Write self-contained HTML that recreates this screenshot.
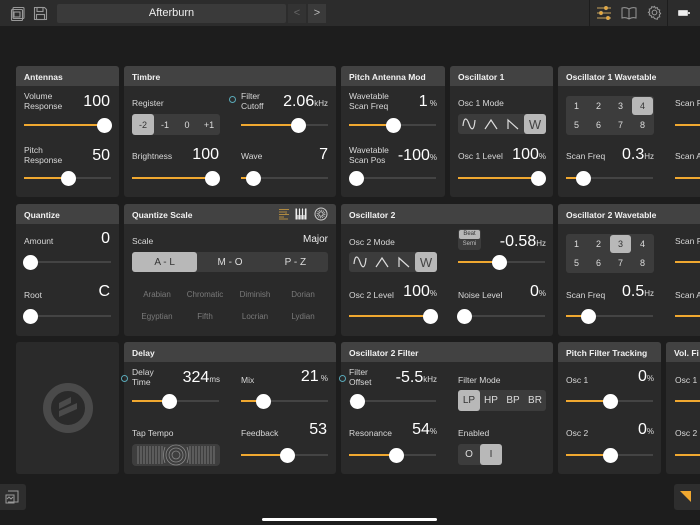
<!DOCTYPE html>
<html><head><meta charset="utf-8"><style>
*{margin:0;padding:0;box-sizing:border-box}
body{width:700px;height:525px;background:#1d1d1d;font-family:"Liberation Sans",sans-serif;color:#ddd;position:relative;overflow:hidden}
.a{position:absolute}
.top{left:0;top:0;width:700px;height:26px;background:#2c2c2c}
.p{position:absolute;background:#2a2a2a;border-radius:3px;overflow:hidden}
.h{height:20px;background:#424242;color:#f2f2f2;font-size:8.5px;font-weight:bold;padding:6px 8px 0;white-space:nowrap}
.l{position:absolute;font-size:8.5px;color:#d8d8d8;line-height:10px;white-space:nowrap}
.v{position:absolute;font-size:16px;color:#fff;text-align:right;line-height:16px}
.v small{font-size:8px;color:#ddd}
.tr{position:absolute;height:2px;background:#444}
.fi{position:absolute;height:2px;background:#f0a830}
.k{position:absolute;width:15px;height:15px;border-radius:50%;background:#fff}
.seg{position:absolute;background:#3c3c3c;border-radius:3px;display:flex;font-size:9px;color:#ddd}
.seg div{flex:1;display:flex;align-items:center;justify-content:center;border-radius:3px}
.seg .on{background:#b8b8b8;color:#333}
.g{position:absolute;font-size:8px;color:#7a7a7a;text-align:center;width:60px}
.grid{position:absolute;background:#3c3c3c;border-radius:3px;width:88px;height:39px}
.grid div{position:absolute;width:21px;height:18px;font-size:9px;color:#ddd;display:flex;align-items:center;justify-content:center;border-radius:3px}
.dot{position:absolute;width:7px;height:7px;border-radius:50%;border:1.5px solid #5aa9b8}
</style></head><body>
<div class="a top"></div>
<svg class="a" style="left:10px;top:6px" width="16" height="16" viewBox="0 0 16 16" fill="none" stroke="#999" stroke-width="1.1"><rect x="3" y="1.5" width="11" height="11" rx="1"/><rect x="1.5" y="3.5" width="11" height="11" rx="1"/><rect x="4" y="6" width="6" height="5"/></svg>
<svg class="a" style="left:33px;top:6px" width="15" height="15" viewBox="0 0 15 15" fill="none" stroke="#999" stroke-width="1.1"><path d="M1.5 1.5h10l2 2v10h-12z"/><rect x="4" y="1.5" width="6" height="4"/><rect x="3.5" y="8.5" width="8" height="5"/></svg>
<div class="a" style="left:57px;top:4px;width:229px;height:19px;background:#3a3a3a;border-radius:2px;color:#eee;font-size:11px;text-align:center;line-height:19px">Afterburn</div>
<div class="a" style="left:288px;top:4px;width:18px;height:19px;background:#333;color:#666;font-size:11px;text-align:center;line-height:19px">&lt;</div>
<div class="a" style="left:308px;top:4px;width:18px;height:19px;background:#3a3a3a;color:#bbb;font-size:11px;text-align:center;line-height:19px">&gt;</div>
<div class="a" style="left:589px;top:0;width:1px;height:26px;background:#1d1d1d"></div>
<div class="a" style="left:667px;top:0;width:1px;height:26px;background:#1d1d1d"></div>
<svg class="a" style="left:596px;top:6px" width="16" height="14" viewBox="0 0 16 14" stroke="#c9a25a" stroke-width="1" fill="#f0a830"><path d="M1 2h14M1 7h14M1 12h14"/><circle cx="10" cy="2" r="1.6"/><circle cx="5" cy="7" r="1.6"/><circle cx="12" cy="12" r="1.6"/></svg>
<svg class="a" style="left:621px;top:6px" width="16" height="14" viewBox="0 0 16 14" fill="none" stroke="#999" stroke-width="1"><path d="M8 3v10M8 3C6 1.5 3 1.5 1 2v10c2-.5 5-.5 7 1 2-1.5 5-1.5 7-1V2c-2-.5-5-.5-7 1"/></svg>
<svg class="a" style="left:647px;top:5px" width="15" height="15" viewBox="0 0 16 16" fill="none" stroke="#999" stroke-width="1.1"><circle cx="8" cy="8" r="2.5"/><path d="M8 1.5l1 1.8 2-.5.6 2 2 .6-.5 2 1.4 1.6-1.4 1.6.5 2-2 .6-.6 2-2-.5L8 14.5l-1-1.8-2 .5-.6-2-2-.6.5-2L1.5 8l1.4-1.6-.5-2 2-.6.6-2 2 .5z"/></svg>
<div class="a" style="left:678px;top:10px;width:10px;height:6px;border:1px solid #ccc;border-radius:1px;background:#eee"></div>
<div class="a" style="left:688px;top:12px;width:2px;height:2px;background:#ccc"></div>

<div class="p" style="left:16px;top:66px;width:103px;height:131px"><div class="h">Antennas</div></div>
<div class="p" style="left:124px;top:66px;width:212px;height:131px"><div class="h">Timbre</div></div>
<div class="p" style="left:341px;top:66px;width:104px;height:131px"><div class="h">Pitch Antenna Mod</div></div>
<div class="p" style="left:450px;top:66px;width:103px;height:131px"><div class="h">Oscillator 1</div></div>
<div class="p" style="left:558px;top:66px;width:150px;height:131px"><div class="h">Oscillator 1 Wavetable</div></div>
<div class="p" style="left:16px;top:204px;width:103px;height:132px"><div class="h">Quantize</div></div>
<div class="p" style="left:124px;top:204px;width:212px;height:132px"><div class="h">Quantize Scale</div></div>
<div class="p" style="left:341px;top:204px;width:212px;height:132px"><div class="h">Oscillator 2</div></div>
<div class="p" style="left:558px;top:204px;width:150px;height:132px"><div class="h">Oscillator 2 Wavetable</div></div>
<div class="p" style="left:16px;top:342px;width:103px;height:132px"></div>
<div class="p" style="left:124px;top:342px;width:212px;height:132px"><div class="h">Delay</div></div>
<div class="p" style="left:341px;top:342px;width:212px;height:132px"><div class="h">Oscillator 2 Filter</div></div>
<div class="p" style="left:558px;top:342px;width:103px;height:132px"><div class="h">Pitch Filter Tracking</div></div>
<div class="p" style="left:666px;top:342px;width:50px;height:132px"><div class="h">Vol. Fi</div></div>

<div class="l" style="left:24px;top:91px">Volume<br>Response</div><div class="v" style="left:60px;top:94px;width:50px">100</div>
<div class="l" style="left:24px;top:145px">Pitch<br>Response</div><div class="v" style="left:60px;top:148px;width:50px">50</div>
<div class="l" style="left:132px;top:98px">Register</div>
<div class="seg" style="left:132px;top:114px;width:88px;height:21px"><div class="on">-2</div><div>-1</div><div>0</div><div>+1</div></div>
<div class="l" style="left:132px;top:151px">Brightness</div><div class="v" style="left:160px;top:147px;width:59px">100</div>
<div class="dot" style="left:229px;top:96px"></div>
<div class="l" style="left:241px;top:91px">Filter<br>Cutoff</div><div class="v" style="left:260px;top:94px;width:68px">2.06<small>kHz</small></div>
<div class="l" style="left:241px;top:151px">Wave</div><div class="v" style="left:290px;top:147px;width:38px">7</div>
<div class="l" style="left:349px;top:91px">Wavetable<br>Scan Freq</div><div class="v" style="left:390px;top:94px;width:47px">1<small> %</small></div>
<div class="l" style="left:349px;top:145px">Wavetable<br>Scan Pos</div><div class="v" style="left:380px;top:148px;width:57px">-100<small>%</small></div>
<div class="l" style="left:458px;top:98px">Osc 1 Mode</div>
<div class="seg wv" style="left:458px;top:114px;width:88px;height:20px;font-size:13px"><div></div><div></div><div></div><div class="on" style="color:#444">W</div></div>
<div class="l" style="left:458px;top:151px">Osc 1 Level</div><div class="v" style="left:500px;top:147px;width:46px">100<small>%</small></div>
<div class="grid" style="left:566px;top:96px"><div style="left:0;top:1px">1</div><div style="left:22px;top:1px">2</div><div style="left:44px;top:1px">3</div><div style="left:66px;top:1px;background:#b8b8b8;color:#333">4</div><div style="left:0;top:20px">5</div><div style="left:22px;top:20px">6</div><div style="left:44px;top:20px">7</div><div style="left:66px;top:20px">8</div></div>
<div class="l" style="left:566px;top:151px">Scan Freq</div><div class="v" style="left:600px;top:147px;width:54px">0.3<small>Hz</small></div>
<div class="l" style="left:675px;top:98px">Scan P</div><div class="l" style="left:675px;top:151px">Scan A</div>
<div class="l" style="left:24px;top:236px">Amount</div><div class="v" style="left:60px;top:231px;width:50px">0</div>
<div class="l" style="left:24px;top:290px">Root</div><div class="v" style="left:60px;top:284px;width:50px">C</div>
<svg class="a" style="left:278px;top:208px" width="12" height="12" viewBox="0 0 12 12" stroke="#b08a40" stroke-width="1"><path d="M1 1.5h10M1 4h6M1 6.5h10M1 9h5M1 11h9M8 3v3"/></svg>
<svg class="a" style="left:295px;top:208px" width="12" height="12" viewBox="0 0 12 12"><rect x="0.5" y="0.5" width="11" height="11" fill="#eee"/><path d="M3 0v7M6 0v7M9 0v7" stroke="#2a2a2a" stroke-width="1.6"/><path d="M3 7v5M6 7v5M9 7v5" stroke="#2a2a2a" stroke-width=".6"/></svg>
<svg class="a" style="left:314px;top:207px" width="14" height="14" viewBox="0 0 14 14" fill="none" stroke="#ccc"><circle cx="7" cy="7" r="6"/><circle cx="7" cy="7" r="3.8" stroke-dasharray="1 1"/><circle cx="7" cy="7" r="2.2"/></svg>
<div class="l" style="left:132px;top:236px">Scale</div><div class="l" style="left:260px;top:235px;width:68px;text-align:right;font-size:10px;color:#eee">Major</div>
<div class="seg" style="left:132px;top:252px;width:196px;height:20px;font-size:10px"><div class="on">A - L</div><div>M - O</div><div>P - Z</div></div>
<div class="g" style="left:127px;top:290px">Arabian</div><div class="g" style="left:175px;top:290px">Chromatic</div><div class="g" style="left:225px;top:290px">Diminish</div><div class="g" style="left:273px;top:290px">Dorian</div>
<div class="g" style="left:127px;top:312px">Egyptian</div><div class="g" style="left:175px;top:312px">Fifth</div><div class="g" style="left:225px;top:312px">Locrian</div><div class="g" style="left:273px;top:312px">Lydian</div>
<div class="l" style="left:349px;top:237px">Osc 2 Mode</div>
<div class="seg wv" style="left:349px;top:252px;width:88px;height:20px;font-size:13px"><div></div><div></div><div></div><div class="on" style="color:#444">W</div></div>
<div class="a" style="left:458px;top:229px;width:23px;height:21px;background:#3c3c3c;border-radius:3px"></div>
<div class="a" style="left:459px;top:230px;width:21px;height:9px;background:#b8b8b8;border-radius:2px;font-size:6px;color:#333;text-align:center;line-height:9px">Beat</div>
<div class="a" style="left:459px;top:240px;width:21px;height:9px;font-size:6px;color:#bbb;text-align:center;line-height:9px">Semi</div>
<div class="v" style="left:485px;top:234px;width:61px">-0.58<small>Hz</small></div>
<div class="l" style="left:349px;top:290px">Osc 2 Level</div><div class="v" style="left:390px;top:284px;width:47px">100<small>%</small></div>
<div class="l" style="left:458px;top:290px">Noise Level</div><div class="v" style="left:500px;top:284px;width:46px">0<small>%</small></div>
<div class="grid" style="left:566px;top:234px"><div style="left:0;top:1px">1</div><div style="left:22px;top:1px">2</div><div style="left:44px;top:1px;background:#b8b8b8;color:#333">3</div><div style="left:66px;top:1px">4</div><div style="left:0;top:20px">5</div><div style="left:22px;top:20px">6</div><div style="left:44px;top:20px">7</div><div style="left:66px;top:20px">8</div></div>
<div class="l" style="left:566px;top:290px">Scan Freq</div><div class="v" style="left:600px;top:284px;width:54px">0.5<small>Hz</small></div>
<div class="l" style="left:675px;top:236px">Scan P</div><div class="l" style="left:675px;top:290px">Scan A</div>
<svg class="a" style="left:41px;top:381px" width="54" height="54" viewBox="0 0 54 54"><circle cx="27" cy="27" r="21" fill="none" stroke="#4a4a4a" stroke-width="8"/><path d="M18 30l18-8v6l-18 8zM18 22l12-6v6l-12 6z" fill="#4a4a4a"/></svg>
<div class="dot" style="left:121px;top:375px"></div>
<div class="l" style="left:132px;top:367px">Delay<br>Time</div><div class="v" style="left:160px;top:370px;width:60px">324<small>ms</small></div>
<div class="l" style="left:241px;top:375px">Mix</div><div class="v" style="left:270px;top:369px;width:58px">21<small> %</small></div>
<div class="l" style="left:132px;top:428px">Tap Tempo</div>
<svg class="a" style="left:132px;top:444px" width="88" height="22" viewBox="0 0 88 22"><rect width="88" height="22" rx="4" fill="#3e3e3e"/><g fill="none" stroke="#888" stroke-width=".8"><circle cx="44" cy="11" r="4"/><circle cx="44" cy="11" r="7"/><circle cx="44" cy="11" r="10"/><path d="M30 2v18M27 2v18M24 2v18M21 2v18M18 2v18M15 2v18M12 2v18M9 2v18M6 2v18M58 2v18M61 2v18M64 2v18M67 2v18M70 2v18M73 2v18M76 2v18M79 2v18M82 2v18M33 3q-3 8 0 16M55 3q3 8 0 16"/></g></svg>
<div class="l" style="left:241px;top:428px">Feedback</div><div class="v" style="left:270px;top:422px;width:57px">53</div>
<div class="dot" style="left:339px;top:375px"></div>
<div class="l" style="left:349px;top:367px">Filter<br>Offset</div><div class="v" style="left:370px;top:370px;width:67px">-5.5<small>kHz</small></div>
<div class="l" style="left:458px;top:375px">Filter Mode</div>
<div class="seg" style="left:458px;top:390px;width:88px;height:21px;font-size:10px"><div class="on">LP</div><div>HP</div><div>BP</div><div>BR</div></div>
<div class="l" style="left:349px;top:428px">Resonance</div><div class="v" style="left:390px;top:422px;width:47px">54<small>%</small></div>
<div class="l" style="left:458px;top:428px">Enabled</div>
<div class="seg" style="left:458px;top:444px;width:44px;height:21px;font-size:10px"><div>O</div><div class="on">I</div></div>
<div class="l" style="left:566px;top:375px">Osc 1</div><div class="v" style="left:600px;top:369px;width:54px">0<small>%</small></div>
<div class="l" style="left:566px;top:428px">Osc 2</div><div class="v" style="left:600px;top:422px;width:54px">0<small>%</small></div>
<div class="l" style="left:675px;top:375px">Osc 1</div><div class="l" style="left:675px;top:428px">Osc 2</div>

<div id="sl"></div>
<div class="a" style="left:0;top:484px;width:26px;height:26px;background:#2e2e2e;border-radius:0 3px 3px 0"></div>
<svg class="a" style="left:5px;top:490px" width="14" height="14" viewBox="0 0 14 14" fill="none" stroke="#999" stroke-width="1"><path d="M3 1h10v11H3M1 5h8v8H1z"/><path d="M2 9l2-2 2 2 2-2"/></svg>
<div class="a" style="left:674px;top:484px;width:30px;height:26px;background:#2e2e2e;border-radius:3px"></div>
<svg class="a" style="left:679px;top:489px" width="14" height="14" viewBox="0 0 14 14"><path d="M1 2h11v11z" fill="#f0a830"/></svg>
<div class="a" style="left:262px;top:518px;width:175px;height:3px;background:#fff;border-radius:2px"></div>
<script>
var W=['<svg width="14" height="12" viewBox="0 0 14 12" fill="none" stroke="#ddd" stroke-width="1.2"><path d="M1 8C2-2 5 0 7 6s5 8 6-4"/></svg>',
'<svg width="14" height="12" viewBox="0 0 14 12" fill="none" stroke="#ddd" stroke-width="1.2"><path d="M1 11L7 2l6 9"/></svg>',
'<svg width="14" height="12" viewBox="0 0 14 12" fill="none" stroke="#ddd" stroke-width="1.2"><path d="M2 11V2l10 9"/></svg>'];
document.querySelectorAll('.wv').forEach(function(s){for(var i=0;i<3;i++)s.children[i].innerHTML=W[i];});
var S=[[24,111,125,104],[24,111,178,68],[241,328,125,298],[132,219,178,212],[241,328,178,253],[349,436,125,393],[349,436,178,356],[458,545,178,538],[566,653,178,583],[675,760,125,740],[675,760,178,740],
[24,111,262,30],[24,111,316,30],[458,545,262,499],[349,436,316,430],[458,545,316,464],[566,653,316,588],[675,760,262,740],[675,760,316,740],
[132,219,401,169],[241,328,401,263],[241,328,455,287],[349,436,401,357],[349,436,455,396],[566,653,401,610],[566,653,455,610],[675,760,401,740],[675,760,455,740]];
var h='';S.forEach(function(s){h+='<div class="tr" style="left:'+s[0]+'px;top:'+(s[2]-1)+'px;width:'+(s[1]-s[0])+'px"></div>';
if(s[3]-s[0]>8)h+='<div class="fi" style="left:'+s[0]+'px;top:'+(s[2]-1)+'px;width:'+(s[3]-s[0])+'px"></div>';
if(s[3]<700)h+='<div class="k" style="left:'+(s[3]-7.5)+'px;top:'+(s[2]-7.5)+'px"></div>';});
document.getElementById('sl').innerHTML=h;
</script>
</body></html>
